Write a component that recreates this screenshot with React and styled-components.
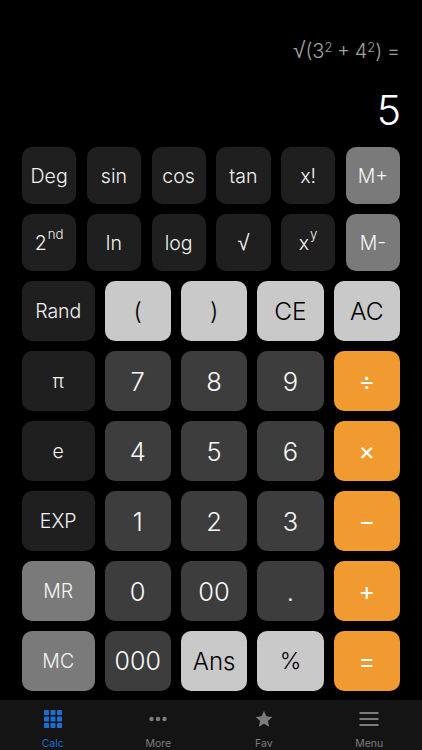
import React from "react";
import styled, { createGlobalStyle } from "styled-components";

const Global = createGlobalStyle`
  html, body { margin: 0; padding: 0; background: #000; }
  * { box-sizing: border-box; }
`;

const COLORS = {
  sci: { bg: "#1f1f1f", fg: "#f2f2f2", weight: 300 },
  mem: { bg: "#7a7a7a", fg: "#f5f5f5", weight: 300 },
  num: { bg: "#3d3d3d", fg: "#f8f8f8", weight: 300 },
  light: { bg: "#c9c9c9", fg: "#000000", weight: 300 },
  op: { bg: "#f09a30", fg: "#ffffff", weight: 400 },
};

const Screen = styled.div`
  width: 422px;
  height: 750px;
  background: #000;
  display: flex;
  flex-direction: column;
  font-family: Inter, "Liberation Sans", sans-serif;
  overflow: hidden;
`;

const Display = styled.div`
  height: 147px;
  padding: 38px 22px 0;
  display: flex;
  flex-direction: column;
  align-items: flex-end;
`;

const Expression = styled.div`
  color: #a0a0a0;
  font-size: 20px;
  line-height: 26px;
  font-weight: 300;
  white-space: nowrap;
  word-spacing: -1px;
  sup {
    font-size: 13px;
    line-height: 0;
    vertical-align: 6px;
  }
`;

const Radical = styled.span`
  font-family: "Liberation Sans", sans-serif;
  font-weight: 400;
  font-size: 1.12em;
  line-height: 0;
`;

const Result = styled.div`
  margin: 22px -1px 0 0;
  color: #fff;
  font-size: 41px;
  line-height: 48px;
  font-weight: 300;
`;

const Pad = styled.div`
  padding: 0 22px;
  display: flex;
  flex-direction: column;
  gap: 10px;
`;

const TopRow = styled.div`
  display: grid;
  grid-template-columns: repeat(6, 1fr);
  column-gap: 10.5px;
  height: 57px;
`;

const MainRow = styled.div`
  display: grid;
  grid-template-columns: 72.5px repeat(4, 1fr);
  column-gap: 10px;
  height: 60px;
`;

const Key = styled.button`
  border: 0;
  padding: 0;
  margin: 0;
  border-radius: 10px;
  display: flex;
  align-items: center;
  justify-content: center;
  font-family: inherit;
  font-weight: ${(p) => COLORS[p.$kind].weight};
  font-size: ${(p) => p.$size || 24}px;
  background: ${(p) => COLORS[p.$kind].bg};
  color: ${(p) => COLORS[p.$kind].fg};
  sup {
    font-size: 0.68em;
    line-height: 1;
    position: relative;
    top: -8px;
    margin-left: 1px;
  }
`;

const TabBar = styled.nav`
  margin-top: 9px;
  height: 50px;
  background: #141414;
  display: grid;
  grid-template-columns: repeat(4, 1fr);
`;

const Tab = styled.div`
  display: flex;
  flex-direction: column;
  align-items: center;
  padding-top: 9px;
  color: ${(p) => (p.$active ? "#1a6fd6" : "#7c7c7c")};
  font-size: 10.5px;
  line-height: 13px;
  font-weight: 400;
`;

const TabIcon = styled.svg`
  width: ${(p) => p.$w || 20}px;
  height: ${(p) => p.$w || 20}px;
  margin: ${(p) => p.$m || "0 0 8px"};
  fill: currentColor;
  display: block;
`;

const GridIcon = () => (
  <TabIcon viewBox="0 0 18 18" $w={18} $m="1px 0 9px">
    {[0, 6.5, 13].flatMap((y) =>
      [0, 6.5, 13].map((x) => <rect key={`${x}-${y}`} x={x} y={y} width="5" height="5" rx="0.6" />)
    )}
  </TabIcon>
);
const DotsIcon = () => (
  <TabIcon viewBox="0 0 20 20">
    <circle cx="3.5" cy="10" r="2.2" />
    <circle cx="10" cy="10" r="2.2" />
    <circle cx="16.5" cy="10" r="2.2" />
  </TabIcon>
);
const StarIcon = () => (
  <TabIcon viewBox="0 0 20 20">
    <path d="M10 2l2.45 5.3 5.8.7-4.3 3.95 1.15 5.75L10 14.85 4.9 17.7l1.15-5.75L1.75 8l5.8-.7z" />
  </TabIcon>
);
const MenuIcon = () => (
  <TabIcon viewBox="0 0 20 20">
    <rect x="0.5" y="3" width="19" height="2" />
    <rect x="0.5" y="9" width="19" height="2" />
    <rect x="0.5" y="15" width="19" height="2" />
  </TabIcon>
);

const row1 = [
  ["Deg", "sci"], ["sin", "sci"], ["cos", "sci"], ["tan", "sci"], ["x!", "sci"], ["M+", "mem"],
];
const row2 = [
  [<>2<sup>nd</sup></>, "sci"], ["ln", "sci"], ["log", "sci"], [<Radical>√</Radical>, "sci"], [<>x<sup>y</sup></>, "sci"], ["M-", "mem"],
];
const rows = [
  [["Rand", "sci", 19.5], ["(", "light", 24], [")", "light", 24], ["CE", "light", 24.5], ["AC", "light", 24.5]],
  [["π", "sci", 19.5], ["7", "num", 25.5], ["8", "num", 25.5], ["9", "num", 25.5], ["÷", "op", 25]],
  [["e", "sci", 19.5], ["4", "num", 25.5], ["5", "num", 25.5], ["6", "num", 25.5], ["×", "op", 25]],
  [["EXP", "sci", 19.5], ["1", "num", 25.5], ["2", "num", 25.5], ["3", "num", 25.5], ["−", "op", 25]],
  [["MR", "mem", 19.5], ["0", "num", 25.5], ["00", "num", 25.5], [".", "num", 25.5], ["+", "op", 25]],
  [["MC", "mem", 19.5], ["000", "num", 25], ["Ans", "light", 24], ["%", "light", 23], ["=", "op", 25]],
];

export default function App() {
  return (
    <Screen>
      <Global />
      <Display>
        <Expression><Radical>√</Radical>(3<sup>2</sup> + 4<sup>2</sup>) =</Expression>
        <Result>5</Result>
      </Display>
      <Pad>
        <TopRow>
          {row1.map(([t, k], i) => (
            <Key key={i} $kind={k} $size={19.5}>{t}</Key>
          ))}
        </TopRow>
        <TopRow>
          {row2.map(([t, k], i) => (
            <Key key={i} $kind={k} $size={19.5}>{t}</Key>
          ))}
        </TopRow>
        {rows.map((r, i) => (
          <MainRow key={i}>
            {r.map(([t, k, s], j) => (
              <Key key={j} $kind={k} $size={s}>{t}</Key>
            ))}
          </MainRow>
        ))}
      </Pad>
      <TabBar>
        <Tab $active><GridIcon />Calc</Tab>
        <Tab><DotsIcon />More</Tab>
        <Tab><StarIcon />Fav</Tab>
        <Tab><MenuIcon />Menu</Tab>
      </TabBar>
    </Screen>
  );
}
